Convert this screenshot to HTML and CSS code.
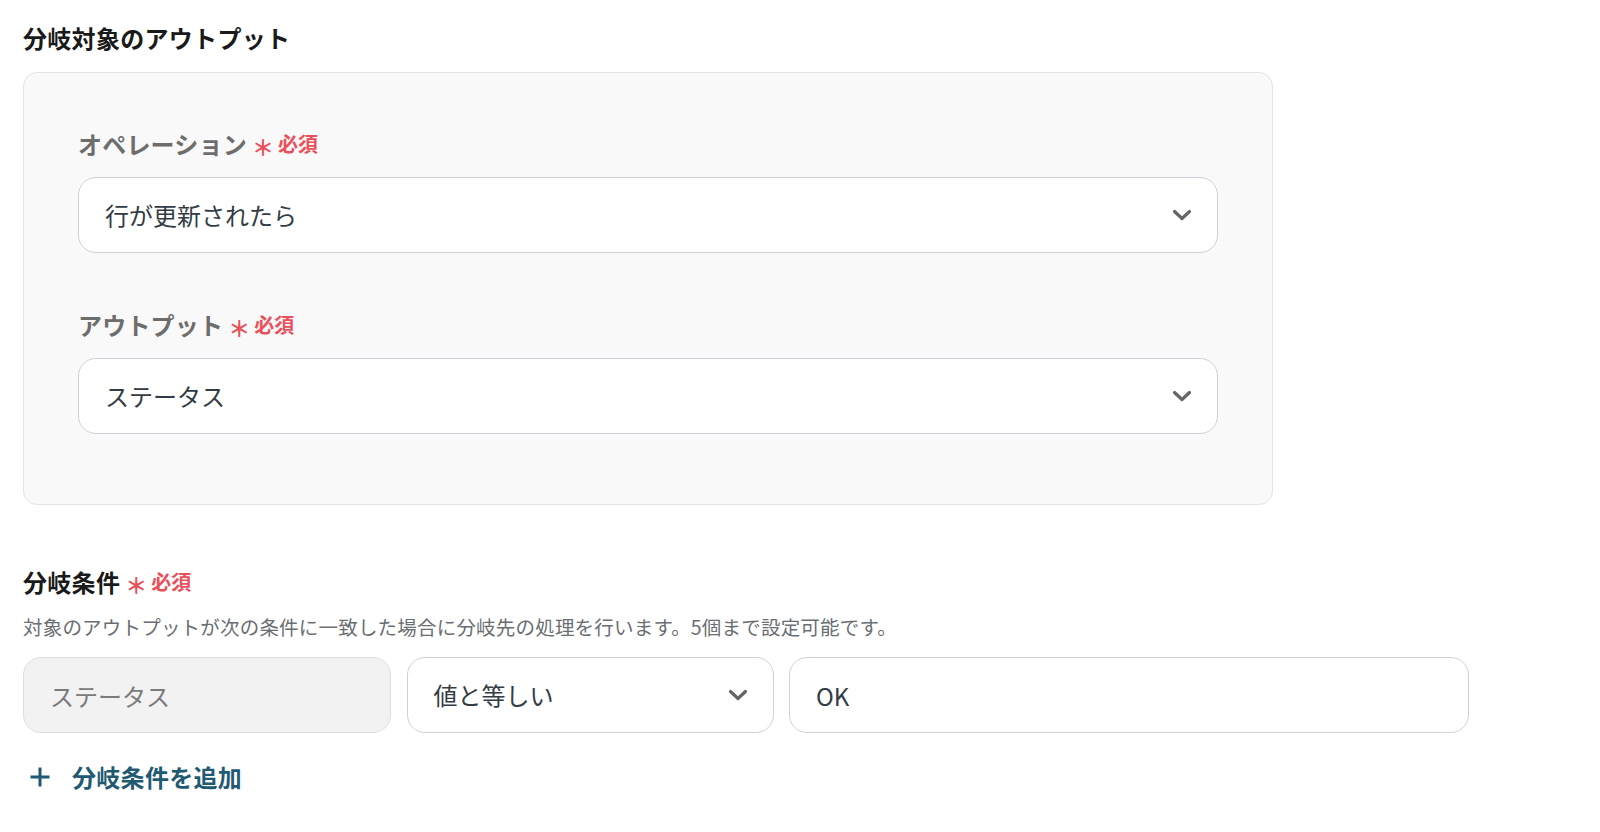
FILE: index.html
```html
<!DOCTYPE html>
<html lang="ja">
<head>
<meta charset="utf-8">
<title>分岐設定</title>
<link rel="stylesheet" href="styles.css">
</head>
<body>
  <section class="section">
    <h2 class="section-title">分岐対象のアウトプット</h2>
    <div class="panel">
      <div class="field">
        <label class="field-label">オペレーション<span class="req"><span class="ast">＊</span>必須</span></label>
        <div class="select">
          <span class="value">行が更新されたら</span>
          <svg class="chev" width="20" height="12" viewBox="0 0 20 12"><path d="M2.5 2.5 L10 9.5 L17.5 2.5" fill="none" stroke="#666" stroke-width="3.2" stroke-linecap="round" stroke-linejoin="round"/></svg>
        </div>
      </div>
      <div class="field field-second">
        <label class="field-label">アウトプット<span class="req"><span class="ast">＊</span>必須</span></label>
        <div class="select">
          <span class="value">ステータス</span>
          <svg class="chev" width="20" height="12" viewBox="0 0 20 12"><path d="M2.5 2.5 L10 9.5 L17.5 2.5" fill="none" stroke="#666" stroke-width="3.2" stroke-linecap="round" stroke-linejoin="round"/></svg>
        </div>
      </div>
    </div>
  </section>

  <section class="section conditions">
    <h2 class="section-title">分岐条件<span class="req"><span class="ast">＊</span>必須</span></h2>
    <p class="desc">対象のアウトプットが次の条件に一致した場合に分岐先の処理を行います。5個まで設定可能です。</p>
    <div class="cond-row">
      <div class="box disabled">ステータス</div>
      <div class="box select">
        <span class="value">値と等しい</span>
        <svg class="chev" width="20" height="12" viewBox="0 0 20 12"><path d="M2.5 2.5 L10 9.5 L17.5 2.5" fill="none" stroke="#666" stroke-width="3.2" stroke-linecap="round" stroke-linejoin="round"/></svg>
      </div>
      <div class="box input">OK</div>
    </div>
    <a class="add-link" href="#">
      <svg width="20" height="20" viewBox="0 0 20 20"><path d="M10 0.5 V19.5 M0.5 10 H19.5" stroke="#1f5a72" stroke-width="3" fill="none"/></svg>
      <span>分岐条件を追加</span>
    </a>
  </section>
</body>
</html>
```

FILE: styles.css
```css
* {
  box-sizing: border-box;
}

body {
  margin: 0;
  padding: 20px 23px 0;
  background: #ffffff;
  font-family: "Noto Sans CJK JP", "Noto Sans", sans-serif;
  color: #1a1a1a;
}

.section-title {
  margin: 0;
  font-size: 24px;
  line-height: 36px;
  font-weight: 700;
  color: #1a1a1a;
  letter-spacing: 0.3px;
  display: flex;
  align-items: center;
}

.panel {
  margin-top: 16px;
  width: 1250px;
  background: #f9f9f9;
  border: 1px solid #e4e4e4;
  border-radius: 14px;
  padding: 55px 54px 70px 54px;
}

.field-label {
  display: flex;
  align-items: center;
  font-size: 24px;
  line-height: 32px;
  font-weight: 700;
  color: #6d6d6d;
  letter-spacing: 0.2px;
  margin-bottom: 17px;
}

.field-second {
  margin-top: 56px;
}

.req {
  display: inline-flex;
  align-items: center;
  color: #e9505a;
  font-size: 20px;
  font-weight: 700;
  letter-spacing: 0;
}

.ast {
  margin-left: 5px;
  margin-right: 4px;
  font-size: 22px;
  position: relative;
  top: 2px;
}

.select,
.box {
  height: 76px;
  border: 1px solid #cdd2d8;
  border-radius: 18px;
  background: #ffffff;
  display: flex;
  align-items: center;
  padding: 0 25px 0 26px;
  font-size: 24px;
  color: #333c45;
}

.select {
  justify-content: space-between;
}

.value {
  line-height: 32px;
}

.chev {
  flex: none;
}

.conditions {
  margin-top: 59px;
}

.desc {
  margin: 12px 0 0;
  font-size: 19.5px;
  line-height: 30px;
  letter-spacing: 0.2px;
  color: #6a6e73;
}

.cond-row {
  margin-top: 15px;
  display: grid;
  grid-template-columns: 368px 367px 680px;
  column-gap: 15.5px;
}

.box.disabled {
  background: #f2f2f2;
  border-color: #dedede;
  color: #7b7b7b;
}

.add-link {
  margin-top: 26px;
  display: inline-flex;
  align-items: center;
  gap: 22px;
  padding-left: 7px;
  font-size: 24px;
  line-height: 36px;
  font-weight: 700;
  color: #1f5a72;
  letter-spacing: 0.3px;
  text-decoration: none;
}
```
